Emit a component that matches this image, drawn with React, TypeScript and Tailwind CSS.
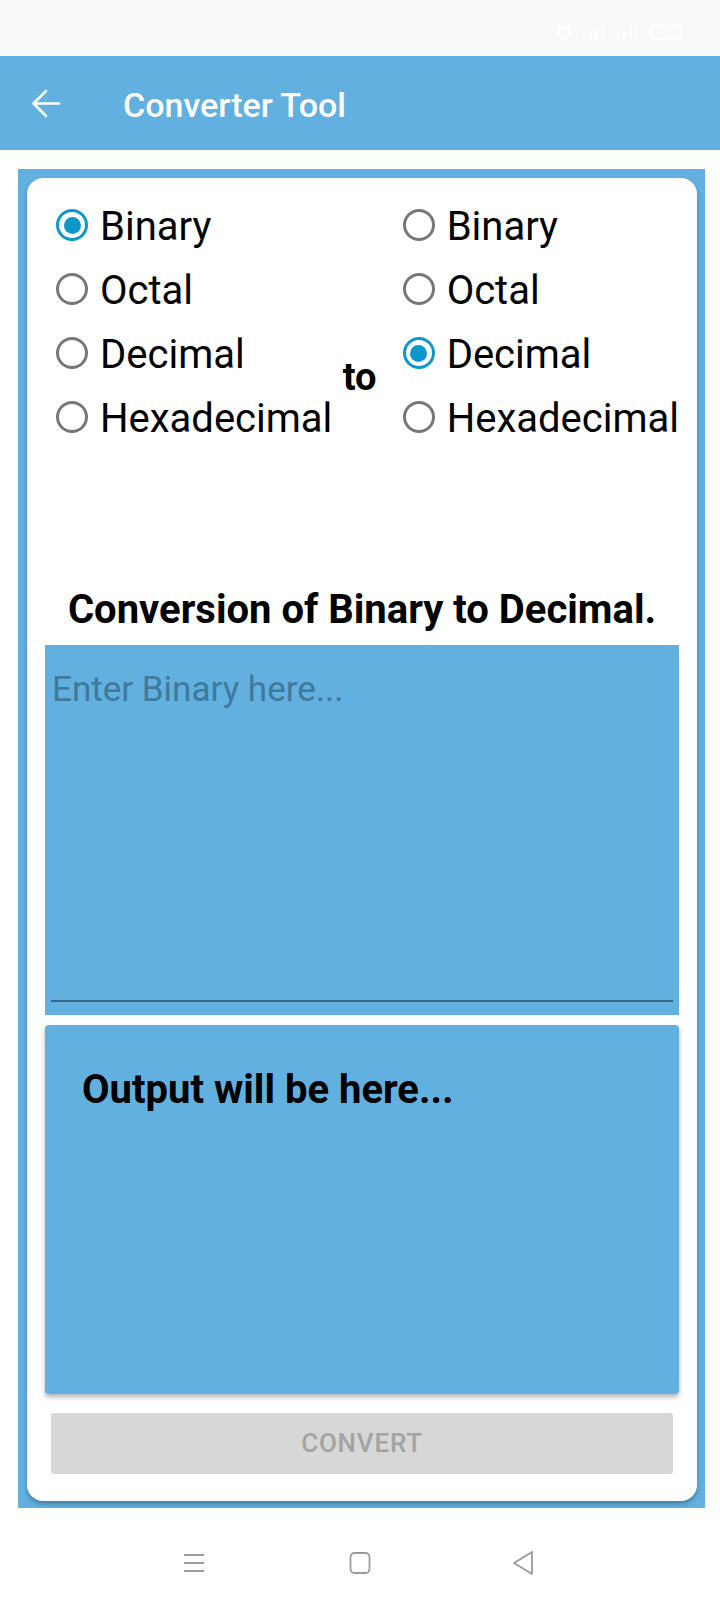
import React from "react";

function Radio({ checked, label }: { checked?: boolean; label: string }) {
  return (
    <div className="flex h-[64px] items-center">
      <span
        className={
          checked
            ? "flex h-[32px] w-[32px] shrink-0 items-center justify-center rounded-full border-[3px] border-[#0d98c9]"
            : "flex h-[32px] w-[32px] shrink-0 items-center justify-center rounded-full border-[3px] border-[#777777]"
        }
      >
        {checked && <span className="h-[17px] w-[17px] rounded-full bg-[#0d98c9]" />}
      </span>
      <span className="ml-[12px] translate-y-[2px] whitespace-nowrap text-[40px] leading-[64px] text-black">{label}</span>
    </div>
  );
}

export default function App() {
  const opts = ["Binary", "Octal", "Decimal", "Hexadecimal"];
  return (
    <div className="flex h-[1600px] w-[720px] flex-col overflow-hidden bg-white font-[Roboto,sans-serif]">
      {/* status bar */}
      <div className="flex h-[56px] items-center justify-end bg-[#f9f9f9] pr-[38px] pt-[8px]">
        <div className="flex items-center gap-[10px]">
          <svg width="16" height="16" viewBox="0 0 16 16" fill="none" stroke="#ffffff" strokeWidth="1.8">
            <circle cx="8" cy="9" r="6" />
            <path d="M8 6v3h2.5M2 3l2-2M14 3l-2-2" />
          </svg>
          <svg width="24" height="16" viewBox="0 0 24 16" fill="#ffffff">
            <rect x="1" y="11" width="3" height="4" />
            <rect x="7" y="8" width="3" height="7" />
            <rect x="13" y="5" width="3" height="10" />
            <rect x="19" y="1" width="3" height="14" opacity="0.5" />
          </svg>
          <svg width="24" height="16" viewBox="0 0 24 16" fill="#ffffff">
            <rect x="1" y="11" width="3" height="4" />
            <rect x="7" y="8" width="3" height="7" />
            <rect x="13" y="5" width="3" height="10" />
            <rect x="19" y="1" width="3" height="14" opacity="0.5" />
          </svg>
          <div className="flex h-[16px] w-[32px] items-center justify-center rounded-[5px] border-2 border-white text-[12px] leading-none text-white">
            76
          </div>
        </div>
      </div>

      {/* header */}
      <div className="flex h-[94px] items-start bg-[#61b0df] pt-[32px]">
        <svg className="ml-[31px] mt-[1px]" width="30" height="30" viewBox="0 0 30 30" fill="none" stroke="#ffffff" strokeWidth="2.6" strokeLinecap="round" strokeLinejoin="round">
          <path d="M28 14.5H3M15 2L2.5 14.5L15 27" />
        </svg>
        <div className="ml-[62px] text-[34px] font-medium leading-[34px] text-white">Converter Tool</div>
      </div>

      {/* content */}
      <div className="pt-[19px]">
        <div className="ml-[18px] h-[1339px] w-[687px] bg-[#61b0df] pb-[7px] pl-[9px] pr-[8px] pt-[9px]">
          <div className="flex h-full w-full flex-col rounded-[16px] bg-white px-[18px] pt-[15px] shadow-[0_3px_4px_rgba(0,0,0,0.28)]">
            {/* radios */}
            <div className="ml-[11px] flex h-[256px]">
              <div className="w-[287px]">
                {opts.map((o) => (
                  <Radio key={"l" + o} label={o} checked={o === "Binary"} />
                ))}
              </div>
              <div className="w-[60px] pt-[165px] text-[38px] font-bold leading-[38px] text-black">to</div>
              <div>
                {opts.map((o) => (
                  <Radio key={"r" + o} label={o} checked={o === "Decimal"} />
                ))}
              </div>
            </div>

            {/* title */}
            <div className="mt-[139px] whitespace-nowrap text-center text-[40px] font-bold leading-[44px] text-black">
              Conversion of Binary to Decimal.
            </div>

            {/* input */}
            <div className="mt-[13px] flex h-[370px] flex-col bg-[#61b0df] px-[6px] pb-[13px]">
              <div className="pl-[1px] pt-[25px] text-[35px] leading-[40px] text-[#40799c]">Enter Binary here...</div>
              <div className="flex-1" />
              <div className="h-[2px] bg-[#3a6684]" />
            </div>

            {/* output */}
            <div className="mt-[10px] h-[369px] rounded-[4px] bg-[#61b0df] pl-[37px] pt-[43px] shadow-[0_3px_5px_rgba(0,0,0,0.3)]">
              <div className="text-[40px] font-bold leading-[44px] text-black">Output will be here...</div>
            </div>

            {/* button */}
            <div className="mx-[6px] mt-[19px] flex h-[61px] items-center justify-center rounded-[3px] bg-[#d6d7d7]">
              <span className="text-[26px] font-medium tracking-[0.8px] text-[#a4a4a4]">CONVERT</span>
            </div>
          </div>
        </div>
      </div>

      {/* nav bar */}
      <div className="flex flex-1 items-center justify-center pt-[18px]">
        <div className="relative h-[24px] w-[720px]">
          <svg className="absolute left-[182px] top-0" width="24" height="24" viewBox="0 0 24 24" fill="none" stroke="#9b9b9b" strokeWidth="1.8">
            <path d="M2 4h20M2 12h20M2 20h20" />
          </svg>
          <svg className="absolute left-[348px] top-0" width="24" height="24" viewBox="0 0 24 24" fill="none" stroke="#9b9b9b" strokeWidth="1.8">
            <rect x="2.5" y="2" width="19" height="20" rx="4" />
          </svg>
          <svg className="absolute left-[511px] top-[-1px]" width="24" height="26" viewBox="0 0 24 26" fill="none" stroke="#9b9b9b" strokeWidth="1.8" strokeLinejoin="round">
            <path d="M21 2L3 13L21 24Z" />
          </svg>
        </div>
      </div>
    </div>
  );
}
